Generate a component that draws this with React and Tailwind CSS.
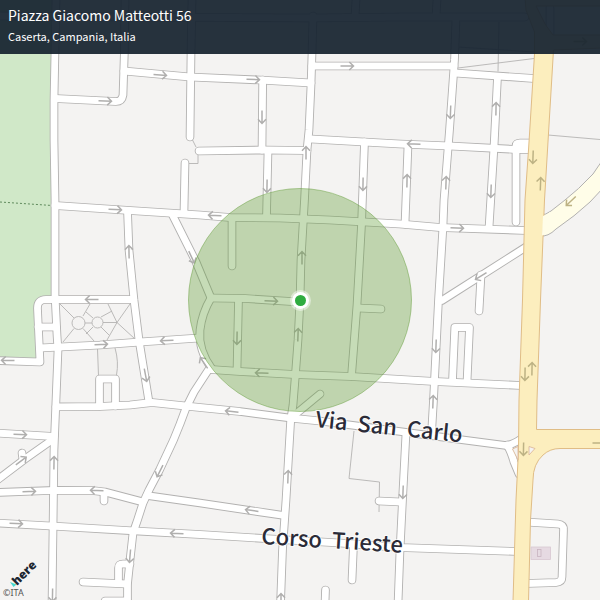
const STREETS = [
  'M56 0L54 100L54 140L55 200L55 295L57 335L58 350L56 400L54 450L53 530L52 604',
  'M55 98.500L116 101.500Q122 101.500 123 95L124.300 54L125 0',
  'M124 71L190 77L260 80L311 83',
  'M192 0L191 54L190 137',
  'M199 151L265 150L307 150.500',
  'M185 163L184 211',
  'M262.700 80L262 150',
  'M268 151L266.500 216',
  'M313 16L312 54L311 85L309 130L307 150L304.500 200L301 260L300 300L298 340L295 380L293 405L290.700 420L286 500L282.500 550L280.500 604',
  'M312 66L454 66',
  'M455 73L534 78.500',
  'M0 16L130 17L313 18L400 17L525 17',
  'M356 0L355 16',
  'M437 0L436 16',
  'M550 8L550 38',
  'M311 139L400 144L450 146L517 149.500L530 149.500',
  'M516 222L516 146Q516 143 520 143L532 143',
  'M364.500 142L361.500 225L357 305L351.500 376',
  'M408 145L405 224',
  'M456 18L454.500 60L449.500 130L444 200L443 226L438.500 300L435 370L433.500 400L431.500 434',
  'M497.500 77L494 147L489 228',
  'M55 205.500L130 210.500L200 215L230 217.500L280 218L330 220L400 224L440 227.500L526 230.500',
  'M127.500 211L129 250L134 300L139 340L149 402',
  'M172 214L196 262L211 298',
  'M211 298L245 298.500L299 302',
  'M211 298Q202 313 200 330Q198 350 212 369',
  'M232 219L232 266',
  'M238.500 300L237 370',
  'M358 308L381 309',
  'M211 369.500L240 371.500L295 374.500L351 376.500L435 381.500L521 385.500',
  'M209 369L194 392L186 408L180 424L173.500 440L159.500 470L149 490L143 503L137.500 520L133 533L130 560L127.500 584L127.500 604',
  'M-4 360.500L40 362L37.500 309Q37 299.500 46 299.500L133 299.500',
  'M38 327L56 327',
  'M40 348L60 347L100 345L140 342L199 338',
  'M99.500 406L99.500 379L115.500 379L115.500 406',
  'M56 406.800L100 406.500L130 405L152 402.500L200 407.500L240 411.500L290 418L320 421L400 431.500L460 439.500L506 445.500Q512 445 521 439',
  'M507 445Q511 451 514 462L519 474',
  'M291 418L320 394',
  'M452.500 381L454.800 327.500L469.500 327.500L467 382',
  'M526 247L442 300.500',
  'M481 275L479 311',
  'M-4 433L54 436.500',
  'M-4 481L25 459L52 440',
  'M22 453L23 460',
  'M-4 492.500L55 490.300L92 490.500L105 492L143 502',
  'M104 493L104 501',
  'M147 495.500L200 503L284 515.500',
  'M-4 523L60 526.500L130 530.700L200 534.500L280 539.500L340 543L400 547.500L517 551.500',
  'M406 433L402.500 500L400 550L398 604',
  'M379 501L401 502',
  'M353.500 545L352 580',
  'M325.500 590L325 604',
  'M118.500 582L118.500 568Q118.500 564 123 564L130 564',
  'M83 582L127 584',
  'M105 601L127 601',
  'M526 522L558 524Q564 524.500 563.500 530L562 577Q562 582 556 582.500L526 583.500',
];

const THIN_LINES = [
  'M192 139L196 147M198 155L198 163.500L188 163.500',
  'M458 68L534 58.500M499 22L498 71.500M458 47L534 52',
  'M548 135L600 139.500',
  'M354 431L349 478.500L379.500 482L379 512',
  'M97.500 349L98.500 376M115 348Q119 362 116.500 375',
  'M59.500 303.500L74 318M90 304L83 316M63 342L74 328.500M83 328.500L94 341M85 323L92 323M86 312L93 318M86 334L93 327M101 317L112 311M103 322.500L117 322.500M101 327L109 335M108 304L117 322.500L130 304M117 322.500L135 339M117 322.500L107 340',
];

// x, y, heading in degrees (0 points right)
const ARROWS = [
  [105, 101, 2], [160, 75, 4], [253, 79.5, 2], [347, 66, 0], [262, 117, 90], [267, 186, 91],
  [306, 153, 270], [302, 258, 270], [298, 335, 272], [288, 477, 272], [281, 600, 270],
  [414, 144, 182], [363, 184, 91], [407, 181, 271], [450.5, 112, 92], [446, 183, 272],
  [436, 346, 92], [433, 402, 272], [496, 109, 271], [491, 191, 92], [115, 209.5, 3],
  [215, 215.5, 183], [457, 228, 2], [129, 252, 269], [145.5, 375, 79], [191.5, 257, 65],
  [271, 301, 2], [237, 338, 91], [262, 373, 182], [160, 471, 117], [130, 556, 95],
  [204, 363, 236], [8, 360.5, 181], [92, 299.5, 180], [101, 344.5, 357], [167, 340.5, 177],
  [232, 411.5, 186], [481, 276, 148], [20, 434.5, 2], [21, 461, 323], [54, 463, 271],
  [29, 491.5, 358], [97, 490.5, 182], [252, 510.5, 188], [16, 523.5, 3], [177, 533.5, 183],
  [403, 492, 92], [52.5, 595, 91],
];

const AVENUE_ARROWS = [
  [533, 157, 92], [540.5, 184, 272], [525, 374, 91], [532, 369, 271], [523.5, 449, 91],
  [599, 443, 0], [571, 201, 137], [580, 41.5, 0],
];

function Arrow({ at, color }) {
  const [x, y, heading] = at;
  return (
    <path
      d="M-6.500 0H6.500M2.300 -4L6.500 0L2.300 4"
      transform={`translate(${x} ${y}) rotate(${heading})`}
      fill="none"
      stroke={color}
      strokeWidth="1.500"
    />
  );
}

function StreetMap() {
  return (
    <svg
      viewBox="0 0 600 600"
      role="img"
      aria-label="Map of Piazza Giacomo Matteotti, Caserta"
      className="block w-full"
    >
      <rect width="600" height="600" fill="#f4f3f2" />
      <path d="M0 0H53L51 100L51.500 297H44Q34 298 34 309L36.500 359L0 357Z" fill="#d0e8c8" />
      <path d="M0 202L52 205.500" stroke="#5f8a5c" strokeWidth="1" strokeDasharray="2 2" />
      <path d="M98 348H116L118 362L116 377H98Z" fill="#f1f0ee" />

      <g fill="none" stroke="#b4b3b2" strokeWidth="0.900">
        {THIN_LINES.map((d) => <path key={d} d={d} />)}
        <circle cx="78.500" cy="323" r="6.500" />
        <circle cx="97.500" cy="322.500" r="5.500" />
      </g>

      <g fill="none" stroke="#b2b1b0" strokeWidth="8.600" strokeLinecap="round" strokeLinejoin="round">
        {STREETS.map((d) => <path key={d} d={d} />)}
      </g>
      <path
        d="M604 158Q597 168 593 174Q578 190 565 200L551 211Q546 215 540 215V236Q548 237 556 229Q575 216 590 202L604 187Z"
        fill="#fffde8"
        stroke="#b2b1b0"
      />
      <g fill="none" stroke="#ffffff" strokeWidth="6.800" strokeLinecap="round" strokeLinejoin="round">
        {STREETS.map((d) => <path key={d} d={d} />)}
      </g>

      <path
        d="M525 -2L526 10L534.500 32V54L528.500 150L525 200L522.500 300L519 400L518.500 450L516 500L513 602H528.500L530.500 520L533 480Q533 464 543 455Q550 448.500 560 448.500H602V429.500H536.500L537 400L540.500 300L544.500 200L547.500 150L553.500 50L602 48V35L553 35L545 24L536 6H602V-2Z"
        fill="#fceebe"
        stroke="#e0bd86"
      />
      <path d="M543 216Q547 215 550 212L556 222L550 232Q546 235 542 235.500Z" fill="#fffde8" />
      <path d="M512.500 449L518 446.500V460ZM529 446.500L535 448.500L529 455Z" fill="#f4f3f2" stroke="#dcb99a" strokeWidth="0.900" />

      <rect x="531" y="547" width="19.500" height="12.500" fill="#e6dae2" stroke="#d8c8d2" strokeWidth="0.800" />
      <rect x="537.500" y="549.500" width="3.500" height="7" fill="none" stroke="#c9b4c0" strokeWidth="0.800" />

      {ARROWS.map((at) => <Arrow key={at.join()} at={at} color="#b0afae" />)}
      {AVENUE_ARROWS.map((at) => <Arrow key={at.join()} at={at} color="#bdb284" />)}

      <circle cx="300" cy="300" r="111.500" fill="#5d9a30" fillOpacity="0.350" stroke="#5d9a30" strokeOpacity="0.450" />
      <circle cx="300.500" cy="300.500" r="10.500" fill="#ffffff" fillOpacity="0.450" />
      <circle cx="300.500" cy="300.500" r="8.500" fill="#ffffff" />
      <circle cx="300.500" cy="300.500" r="5.500" fill="#2fac40" />

      <g
        className="font-['Noto_Sans_CJK_SC',sans-serif] text-[22px] font-medium"
        fill="#2b2b38"
        stroke="#ffffff"
        strokeOpacity="0.700"
        strokeWidth="2"
        paintOrder="stroke"
      >
        <text transform="translate(315 427) rotate(6)">Via{'\u00a0 '}San{'\u00a0 '}Carlo</text>
        <text transform="translate(261 544) rotate(3.500)">Corso{'\u00a0 '}Trieste</text>
      </g>

      <path d="M10 582L16.500 584.500L13.500 587Z" fill="#48dad0" />
      <text
        transform="translate(17 586) rotate(-45)"
        className="font-['Open_Sans',sans-serif] text-[12px] font-extrabold"
        fill="#1b2530"
      >
        here
      </text>
      <text x="3" y="596" className="font-['Noto_Sans',sans-serif] text-[9px]" fill="#555555">
        ©ITA
      </text>
    </svg>
  );
}

export default function App() {
  return (
    <main className="relative w-full overflow-hidden bg-[#f4f3f2]">
      <StreetMap />
      <header className="absolute inset-x-0 top-0 bg-[#15222f]/93 px-2 pt-1 pb-2 font-['Noto_Sans_CJK_SC',sans-serif] text-white">
        <h1 className="text-[14px] leading-[22px]">Piazza Giacomo Matteotti 56</h1>
        <p className="text-[11px] leading-5">Caserta, Campania, Italia</p>
      </header>
    </main>
  );
}
